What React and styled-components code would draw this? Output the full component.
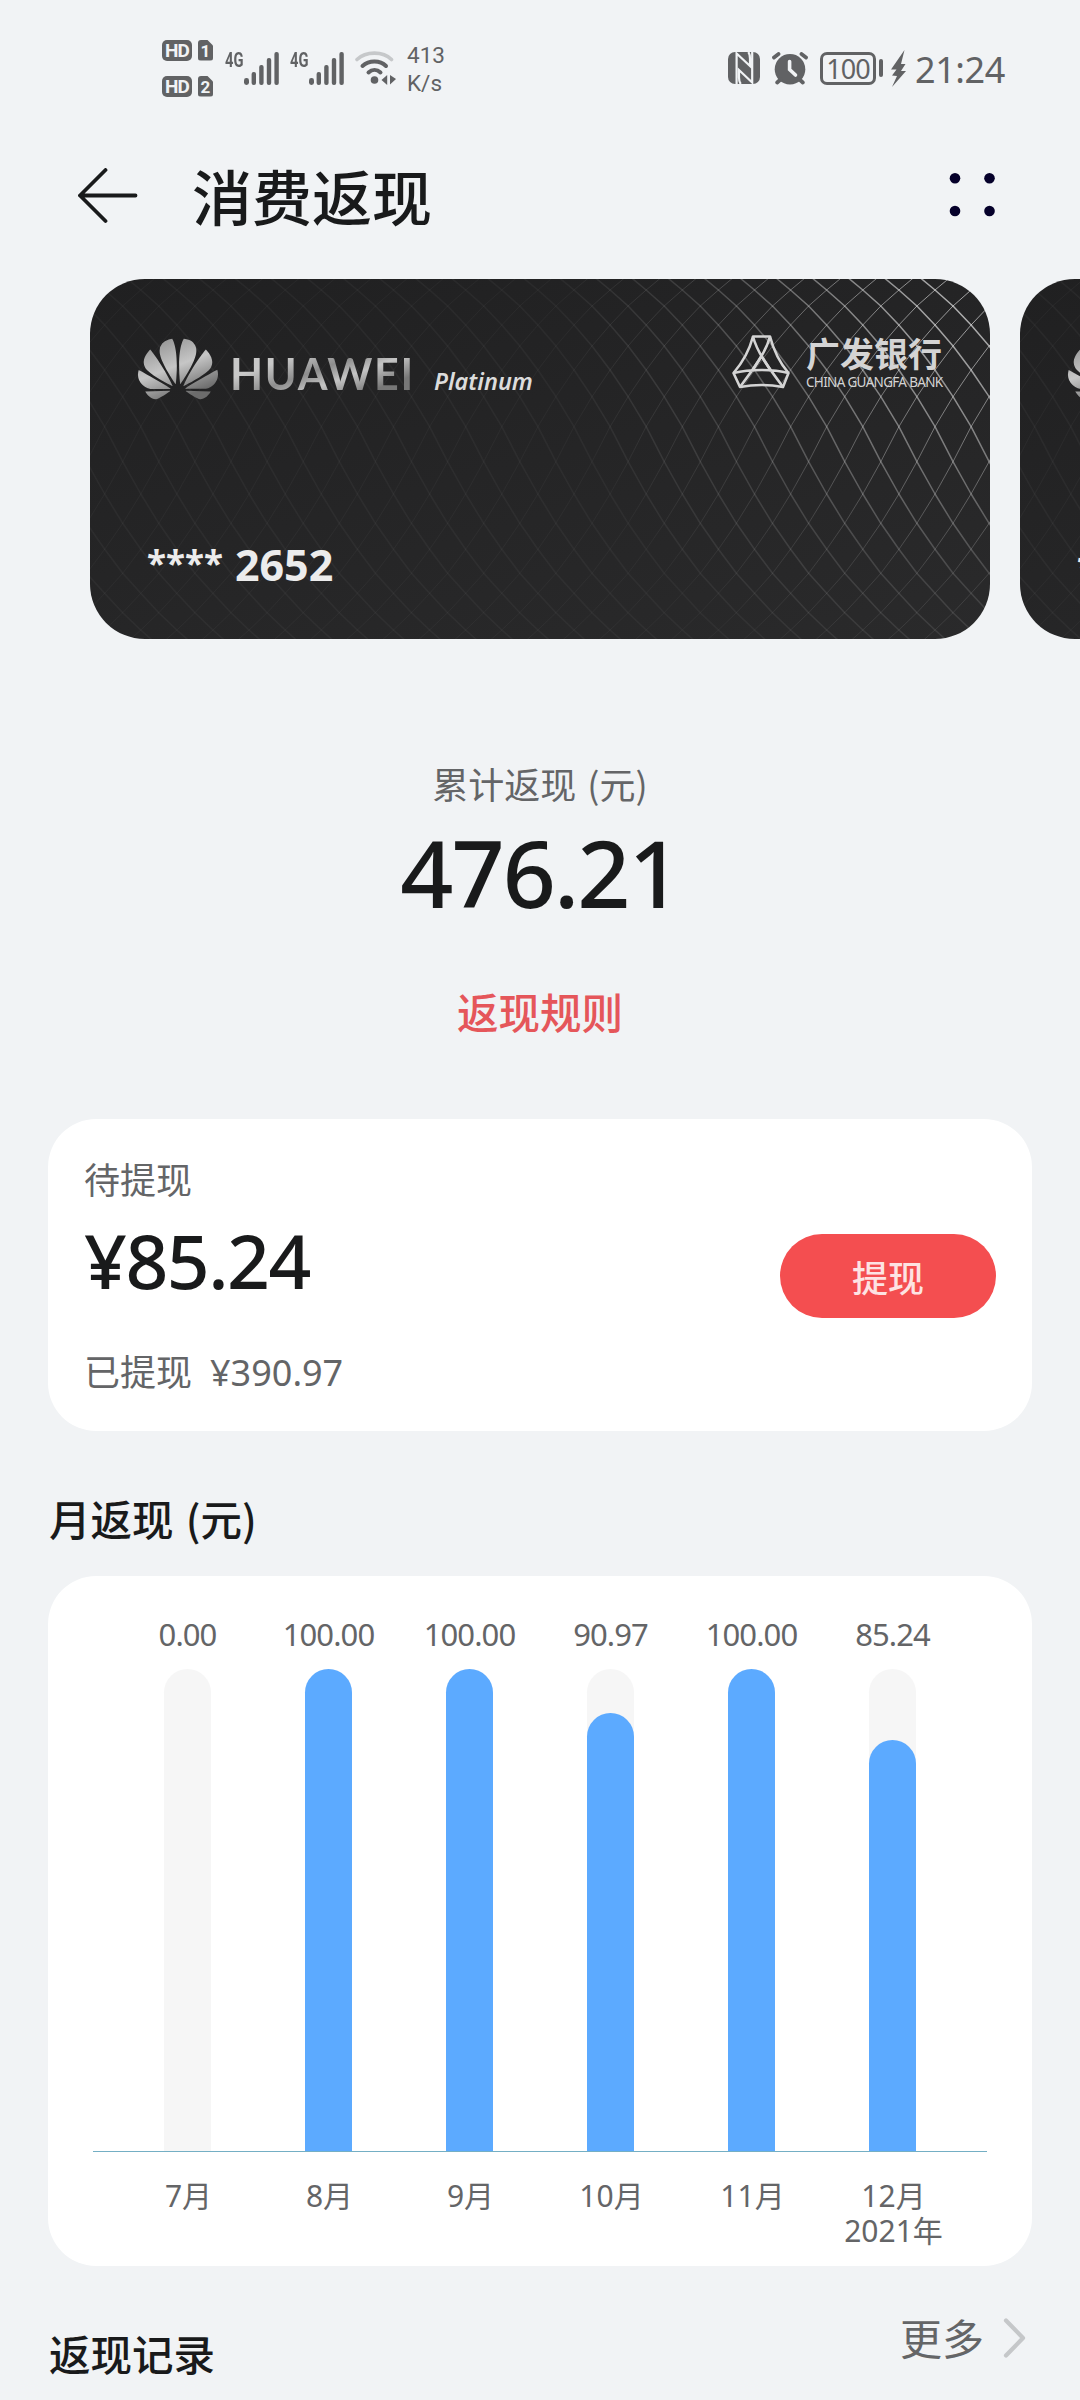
import React from "react";
import styled, { createGlobalStyle, css } from "styled-components";
import { SiHuawei } from "react-icons/si";

const GlobalStyle = createGlobalStyle`
  * {
    box-sizing: border-box;
  }
  body {
    margin: 0;
    background: #f1f3f5;
    font-family: "Noto Sans CJK SC", "Noto Sans", sans-serif;
    color: #191a1b;
  }
`;

const digits = css`
  font-family: "Noto Sans", "Noto Sans CJK SC", sans-serif;
`;

const Page = styled.main`
  display: flex;
  flex-direction: column;
  width: 1080px;
  height: 2400px;
  overflow: hidden;
  background: #f1f3f5;
`;

/* ---------- status bar ---------- */

const StatusBar = styled.div`
  display: flex;
  justify-content: space-between;
  align-items: center;
  height: 136px;
  padding: 0 75px 0 162px;
  color: #616264;
`;

const StatusGroup = styled.div`
  display: flex;
  align-items: center;
`;

const SimStack = styled.div`
  display: flex;
  flex-direction: column;
  gap: 15px;
  margin-right: 12px;
`;

const SimRow = styled.div`
  display: flex;
  gap: 6px;
`;

const HdBadge = styled.span`
  width: 30px;
  height: 21px;
  border-radius: 5px;
  background: #616264;
  color: #f1f3f5;
  font: 700 19px/22px "Roboto", sans-serif;
  letter-spacing: -0.8px;
  text-align: center;
`;

const SimBadge = styled(HdBadge)`
  width: 15px;
  border-radius: 3px;
  font-size: 17px;
  letter-spacing: 0;
  clip-path: polygon(0 0, 60% 0, 100% 28%, 100% 100%, 0 100%);
`;

const Signal = styled.div`
  display: flex;
  align-items: flex-start;
  height: 33px;
  margin-right: 11px;
`;

const Network = styled.span`
  width: 19px;
  font: 700 21px/16px "Roboto", sans-serif;
  transform: scaleX(0.7);
  transform-origin: left;
`;

const Speed = styled.div`
  margin-left: 10px;
  padding-top: 1px;
  font: 400 22.5px/28px "Roboto", sans-serif;
`;

const Battery = styled.div`
  width: 56px;
  height: 33px;
  margin-left: 12px;
  border: 3px solid #616264;
  border-radius: 7px;
  font: 400 27px/27px "Noto Sans", sans-serif;
  letter-spacing: -1px;
  text-align: center;
`;

const BatteryTip = styled.div`
  width: 4px;
  height: 18px;
  margin: 0 8px 0 3px;
  border-radius: 2px;
  background: #616264;
`;

const Clock = styled.span`
  margin-left: 9px;
  padding-top: 4px;
  font: 400 36px/40px "Noto Sans", sans-serif;
  letter-spacing: -0.4px;
`;

const IconPair = styled.div`
  display: flex;
  align-items: center;
  gap: 12px;
`;

function SignalBars() {
  return (
    <svg width="35" height="33" fill="currentColor">
      <rect x="0" y="26" width="5" height="7" rx="2.4" />
      <rect x="7.6" y="20" width="4.4" height="13" rx="2" />
      <rect x="15.2" y="13" width="4.4" height="20" rx="2" />
      <rect x="22.8" y="6" width="4.4" height="27" rx="2" />
      <rect x="30.4" y="0" width="4.4" height="33" rx="2" />
    </svg>
  );
}

function WifiIcon() {
  return (
    <svg width="42" height="34" fill="none" stroke="currentColor" strokeLinecap="round">
      <path d="M2 8.5C11 0 28 0 36.5 8.5" stroke="#c6c8ca" strokeWidth="3.6" />
      <path d="M7.5 15C14 9 25 9 31 15" strokeWidth="4" />
      <path d="M13.5 21.5C17 18.3 22 18.3 25.5 21.5" strokeWidth="4" />
      <circle cx="19.5" cy="29" r="3.8" fill="currentColor" stroke="none" />
      <path d="M26.5 29L32.2 24V34ZM35 24L41 28L35 33.5Z" fill="currentColor" stroke="none" />
    </svg>
  );
}

function NfcIcon() {
  return (
    <svg width="32" height="32" viewBox="0 0 32 32">
      <rect width="32" height="32" rx="7" fill="#616264" />
      <path
        d="M8.6 32V1.5L22 14V6.5C22 3.5 21.5 1.5 20.3 0M24.2 0V30.5L11 18V25.5C11 28.5 11.5 30.5 12.8 32"
        fill="none"
        stroke="#f1f3f5"
        strokeWidth="2.2"
      />
    </svg>
  );
}

function AlarmIcon() {
  return (
    <svg width="36" height="33" fill="none" stroke="#616264" strokeLinecap="round">
      <circle cx="18" cy="17.3" r="15.3" fill="#616264" stroke="none" />
      <path d="M2 5.5L6.5 2M34 5.5L29.5 2M5.2 30.5L9 27M30.8 30.5L27 27" strokeWidth="3.8" />
      <path d="M17.6 9.5V17.5L23.5 23" stroke="#f1f3f5" strokeWidth="3.6" />
    </svg>
  );
}

function BoltIcon() {
  return (
    <svg width="15" height="37" fill="#616264">
      <path d="M13.5 0L0 19.5H5.5L1 25.5L6 26L1 37L15 21H10L14.5 14H10Z" />
    </svg>
  );
}

/* ---------- title bar ---------- */

const TitleBar = styled.header`
  display: flex;
  align-items: center;
  height: 120px;
  padding: 0 84px 0 78px;
`;

const Title = styled.h1`
  flex: 1;
  margin: 0 0 3px 54px;
  font-size: 60px;
  line-height: 80px;
  font-weight: 500;
`;

/* ---------- bank cards ---------- */

const CardStrip = styled.section`
  display: flex;
  gap: 30px;
  margin-top: 23px;
  padding-left: 90px;
`;

const BankCard = styled.article`
  display: grid;
  grid-template: 100% / 100%;
  flex: 0 0 900px;
  height: 360px;
  border-radius: 55px;
  overflow: hidden;
  background: linear-gradient(165deg, #202021, #2a2a2b);

  > * {
    grid-area: 1 / 1;
  }
`;

const CardFace = styled.div`
  display: flex;
  flex-direction: column;
  justify-content: space-between;
  z-index: 1;
  padding: 50px 47px 49px 48px;
`;

const CardTop = styled.div`
  display: flex;
  justify-content: space-between;
`;

const Brand = styled.div`
  display: flex;
  height: 80px;
  align-items: center;

  svg path {
    fill: url(#silver);
  }
`;

const BrandName = styled.span`
  margin: 9px 0 0 12px;
  font: 700 43px/48px "Lato", sans-serif;
  letter-spacing: 1.7px;
  background: linear-gradient(160deg, #c8c8c8 25%, #8d8d8d 45%, #c4c4c4 60%, #777 80%);
  background-clip: text;
  color: transparent;
`;

const Tier = styled.span`
  margin: 23px 0 0 19px;
  font: italic 600 23.5px/30px "Noto Sans", sans-serif;
  color: #dcdcdc;
`;

const Bank = styled.div`
  display: flex;
  gap: 16px;
  padding-top: 6px;
  color: #d4d4d4;
`;

const BankName = styled.div`
  display: flex;
  flex-direction: column;
  width: 137px;
  white-space: nowrap;
  font-size: 34px;
  font-weight: 700;
  line-height: 36px;
`;

const BankNameEn = styled.span`
  font: 400 13.5px/22px "Noto Sans", sans-serif;
  letter-spacing: -0.68px;
`;

const CardNumber = styled.div`
  display: flex;
  gap: 12px;
  padding-left: 9px;
  font: 700 43px/50px "Noto Sans", sans-serif;
  color: #ececec;
`;

const Stars = styled.span`
  font-size: 35px;
  line-height: 46px;
`;

// Heights at which the two families of curves cross.
const crossings = [-4, 11, 27, 46, 67, 91, 117.7, 147.7, 182.7, 215, 244.3, 270.3, 294.3, 314.3, 333.7, 351, 367];

function curve(start, direction) {
  return crossings
    .map((y, i) => `${i ? "L" : "M"}${(start + direction * i * 18.05).toFixed(1)} ${y}`)
    .join("");
}

function Mesh() {
  const falling = [];
  const rising = [];
  for (let i = -9; i < 34; i++) {
    falling.push(curve(i * 36.1 - 3.4, 1));
    rising.push(curve(i * 36.1 - 3.4, -1));
  }
  return (
    <svg width="900" height="360" fill="none" strokeLinejoin="round">
      <defs>
        <radialGradient id="shine" gradientUnits="userSpaceOnUse" cx="890" cy="10" r="420">
          <stop offset="0" stopColor="#fff" stopOpacity="0.68" />
          <stop offset="0.35" stopColor="#fff" stopOpacity="0.42" />
          <stop offset="0.7" stopColor="#fff" stopOpacity="0.13" />
          <stop offset="1" stopColor="#fff" stopOpacity="0.038" />
        </radialGradient>
        <linearGradient id="silver" x1="0" y1="0" x2="0.5" y2="1">
          <stop offset="0" stopColor="#888" />
          <stop offset="0.55" stopColor="#c6c6c6" />
          <stop offset="1" stopColor="#6c6c6c" />
        </linearGradient>
      </defs>
      <path d={falling.join("")} stroke="url(#shine)" strokeWidth="1.5" />
      <path d={rising.join("")} stroke="url(#shine)" strokeWidth="0.9" />
    </svg>
  );
}

function BankLogo() {
  return (
    <svg width="58" height="54" fill="none" stroke="currentColor" strokeWidth="2.6" strokeLinejoin="round">
      <path d="M21 1.5H38C41 13 47 27 56.5 38L51 52C38 49.5 21 49.5 8 52L1.5 38C11 27 18 13 21 1.5Z" />
      <path d="M21 1.5C25 17 36 32 51 52M38 1.5C34 17 23 32 8 52M1.5 38C18 34 41 34 56.5 38" />
      <path d="M29.5 21L20 36M29.5 21L39 36" />
    </svg>
  );
}

/* ---------- totals ---------- */

const Summary = styled.section`
  display: flex;
  flex-direction: column;
  align-items: center;
  padding-top: 119px;
`;

const Caption = styled.div`
  font-size: 36px;
  line-height: 50px;
  word-spacing: 3px;
  color: #646567;
`;

const Total = styled.div`
  ${digits}
  margin-top: 14px;
  font-size: 93px;
  font-weight: 500;
  line-height: 100px;
  letter-spacing: -2px;
`;

const RulesLink = styled.a`
  margin-top: 59px;
  font-size: 41.5px;
  font-weight: 500;
  line-height: 60px;
  color: #e5565a;
`;

const Panel = styled.section`
  margin: 0 48px;
  border-radius: 48px;
  background: #fff;
`;

const Withdraw = styled(Panel)`
  display: flex;
  justify-content: space-between;
  align-items: center;
  height: 312px;
  margin-top: 78px;
  padding: 1px 36px 0;
`;

const Amount = styled.div`
  ${digits}
  margin: 17px 0 45px;
  font-size: 75px;
  font-weight: 500;
  line-height: 80px;
  letter-spacing: -1.5px;
`;

const Withdrawn = styled.span`
  ${digits}
  margin-left: 18px;
`;

const Button = styled.button`
  width: 216px;
  height: 84px;
  border: 0;
  border-radius: 42px;
  background: #f44e50;
  color: #fde3e3;
  font: 500 36px/50px "Noto Sans CJK SC", sans-serif;
`;

/* ---------- monthly chart ---------- */

const SectionTitle = styled.h2`
  margin: 57px 0 28px 49px;
  font-size: 41.5px;
  font-weight: 500;
  line-height: 60px;
  word-spacing: 3px;
`;

const ChartPanel = styled(Panel)`
  flex: 0 0 690px;
  padding: 33px 45px 0;
`;

const Chart = styled.div`
  display: grid;
  grid-template-columns: repeat(6, 141px);
  justify-content: center;
`;

const Month = styled.div`
  ${digits}
  display: flex;
  flex-direction: column;
  align-items: center;
  font-size: 30px;
  line-height: 35px;
  text-align: center;
  color: #646567;
`;

const Value = styled.div`
  height: 60px;
  line-height: 50px;
  font-size: 31px;
  letter-spacing: -0.9px;
`;

const Track = styled.div`
  display: flex;
  align-items: flex-end;
  align-self: stretch;
  justify-content: center;
  height: 483px;
  margin-bottom: 26px;
  border-bottom: 1px solid #74afc4;
`;

const Rail = styled.div`
  display: flex;
  align-items: flex-end;
  width: 47px;
  height: 482px;
  border-radius: 24px 24px 0 0;
  background: #f6f6f6;
`;

const Fill = styled.div`
  width: 47px;
  border-radius: 24px 24px 0 0;
  background: #5caaff;
`;

const MonthLabel = styled.span`
  padding-left: 2px;
`;

const AxisRow = styled.div`
  display: grid;
  grid-template-columns: 24px 846px 24px;
`;

const AxisEnd = styled.div`
  height: 543px;
  border-bottom: 1px solid #74afc4;
`;

const months = [
  { value: 0, label: "7月" },
  { value: 100, label: "8月" },
  { value: 100, label: "9月" },
  { value: 90.97, label: "10月" },
  { value: 100, label: "11月" },
  { value: 85.24, label: "12月", year: "2021年" },
];

/* ---------- records ---------- */

const RecordsBar = styled.section`
  display: flex;
  justify-content: space-between;
  padding: 41px 53px 0 49px;
`;

const RecordsTitle = styled.h2`
  margin: 16px 0 0;
  font-size: 41.5px;
  font-weight: 500;
  line-height: 60px;
`;

const More = styled.a`
  display: flex;
  align-items: center;
  gap: 19px;
  height: 60px;
  font-size: 42px;
  line-height: 60px;
  color: #646567;

  svg {
    margin-top: 2px;
  }
`;

export default function App() {
  return (
    <Page>
      <GlobalStyle />
      <StatusBar>
        <StatusGroup>
          <SimStack>
            <SimRow>
              <HdBadge>HD</HdBadge>
              <SimBadge>1</SimBadge>
            </SimRow>
            <SimRow>
              <HdBadge>HD</HdBadge>
              <SimBadge>2</SimBadge>
            </SimRow>
          </SimStack>
          <Signal>
            <Network>4G</Network>
            <SignalBars />
          </Signal>
          <Signal>
            <Network>4G</Network>
            <SignalBars />
          </Signal>
          <WifiIcon />
          <Speed>
            413
            <br />
            K/s
          </Speed>
        </StatusGroup>
        <StatusGroup>
          <IconPair>
            <NfcIcon />
            <AlarmIcon />
          </IconPair>
          <Battery>100</Battery>
          <BatteryTip />
          <BoltIcon />
          <Clock>21:24</Clock>
        </StatusGroup>
      </StatusBar>

      <TitleBar>
        <svg width="60" height="56" fill="none" stroke="#191a1b" strokeWidth="3.8" strokeLinecap="round" strokeLinejoin="round">
          <path d="M27.5 2L2 27.5L27.5 53M2 27.5H57.5" />
        </svg>
        <Title>消费返现</Title>
        <svg width="47" height="46" fill="#05002a">
          <circle cx="6" cy="5.3" r="5.3" />
          <circle cx="40.5" cy="5.3" r="5.3" />
          <circle cx="6" cy="38" r="5.3" />
          <circle cx="40.5" cy="38" r="5.3" />
        </svg>
      </TitleBar>

      <CardStrip>
        <BankCard>
          <Mesh />
          <CardFace>
            <CardTop>
              <Brand>
                <SiHuawei size={80} />
                <BrandName>HUAWEI</BrandName>
                <Tier>Platinum</Tier>
              </Brand>
              <Bank>
                <BankLogo />
                <BankName>
                  广发银行
                  <BankNameEn>CHINA GUANGFA BANK</BankNameEn>
                </BankName>
              </Bank>
            </CardTop>
            <CardNumber>
              <Stars>****</Stars>
              <span>2652</span>
            </CardNumber>
          </CardFace>
        </BankCard>
        <BankCard>
          <Mesh />
          <CardFace>
            <Brand>
              <SiHuawei size={80} />
            </Brand>
            <CardNumber>
              <Stars>****</Stars>
            </CardNumber>
          </CardFace>
        </BankCard>
      </CardStrip>

      <Summary>
        <Caption>累计返现 (元)</Caption>
        <Total>476.21</Total>
        <RulesLink>返现规则</RulesLink>
      </Summary>

      <Withdraw>
        <div>
          <Caption>待提现</Caption>
          <Amount>¥85.24</Amount>
          <Caption>
            已提现<Withdrawn>¥390.97</Withdrawn>
          </Caption>
        </div>
        <Button>提现</Button>
      </Withdraw>

      <SectionTitle>月返现 (元)</SectionTitle>
      <ChartPanel>
        <AxisRow>
          <AxisEnd />
          <Chart>
            {months.map((month) => (
              <Month key={month.label}>
                <Value>{month.value.toFixed(2)}</Value>
                <Track>
                  <Rail>
                    <Fill style={{ height: `${month.value}%` }} />
                  </Rail>
                </Track>
                <MonthLabel>{month.label}</MonthLabel>
                {month.year && <MonthLabel>{month.year}</MonthLabel>}
              </Month>
            ))}
          </Chart>
          <AxisEnd />
        </AxisRow>
      </ChartPanel>

      <RecordsBar>
        <RecordsTitle>返现记录</RecordsTitle>
        <More>
          更多
          <svg width="24" height="42" fill="none" stroke="#c5c7c9" strokeWidth="4.2" strokeLinecap="round" strokeLinejoin="round">
            <path d="M3 3.5L20 21L3 38.5" />
          </svg>
        </More>
      </RecordsBar>
    </Page>
  );
}
